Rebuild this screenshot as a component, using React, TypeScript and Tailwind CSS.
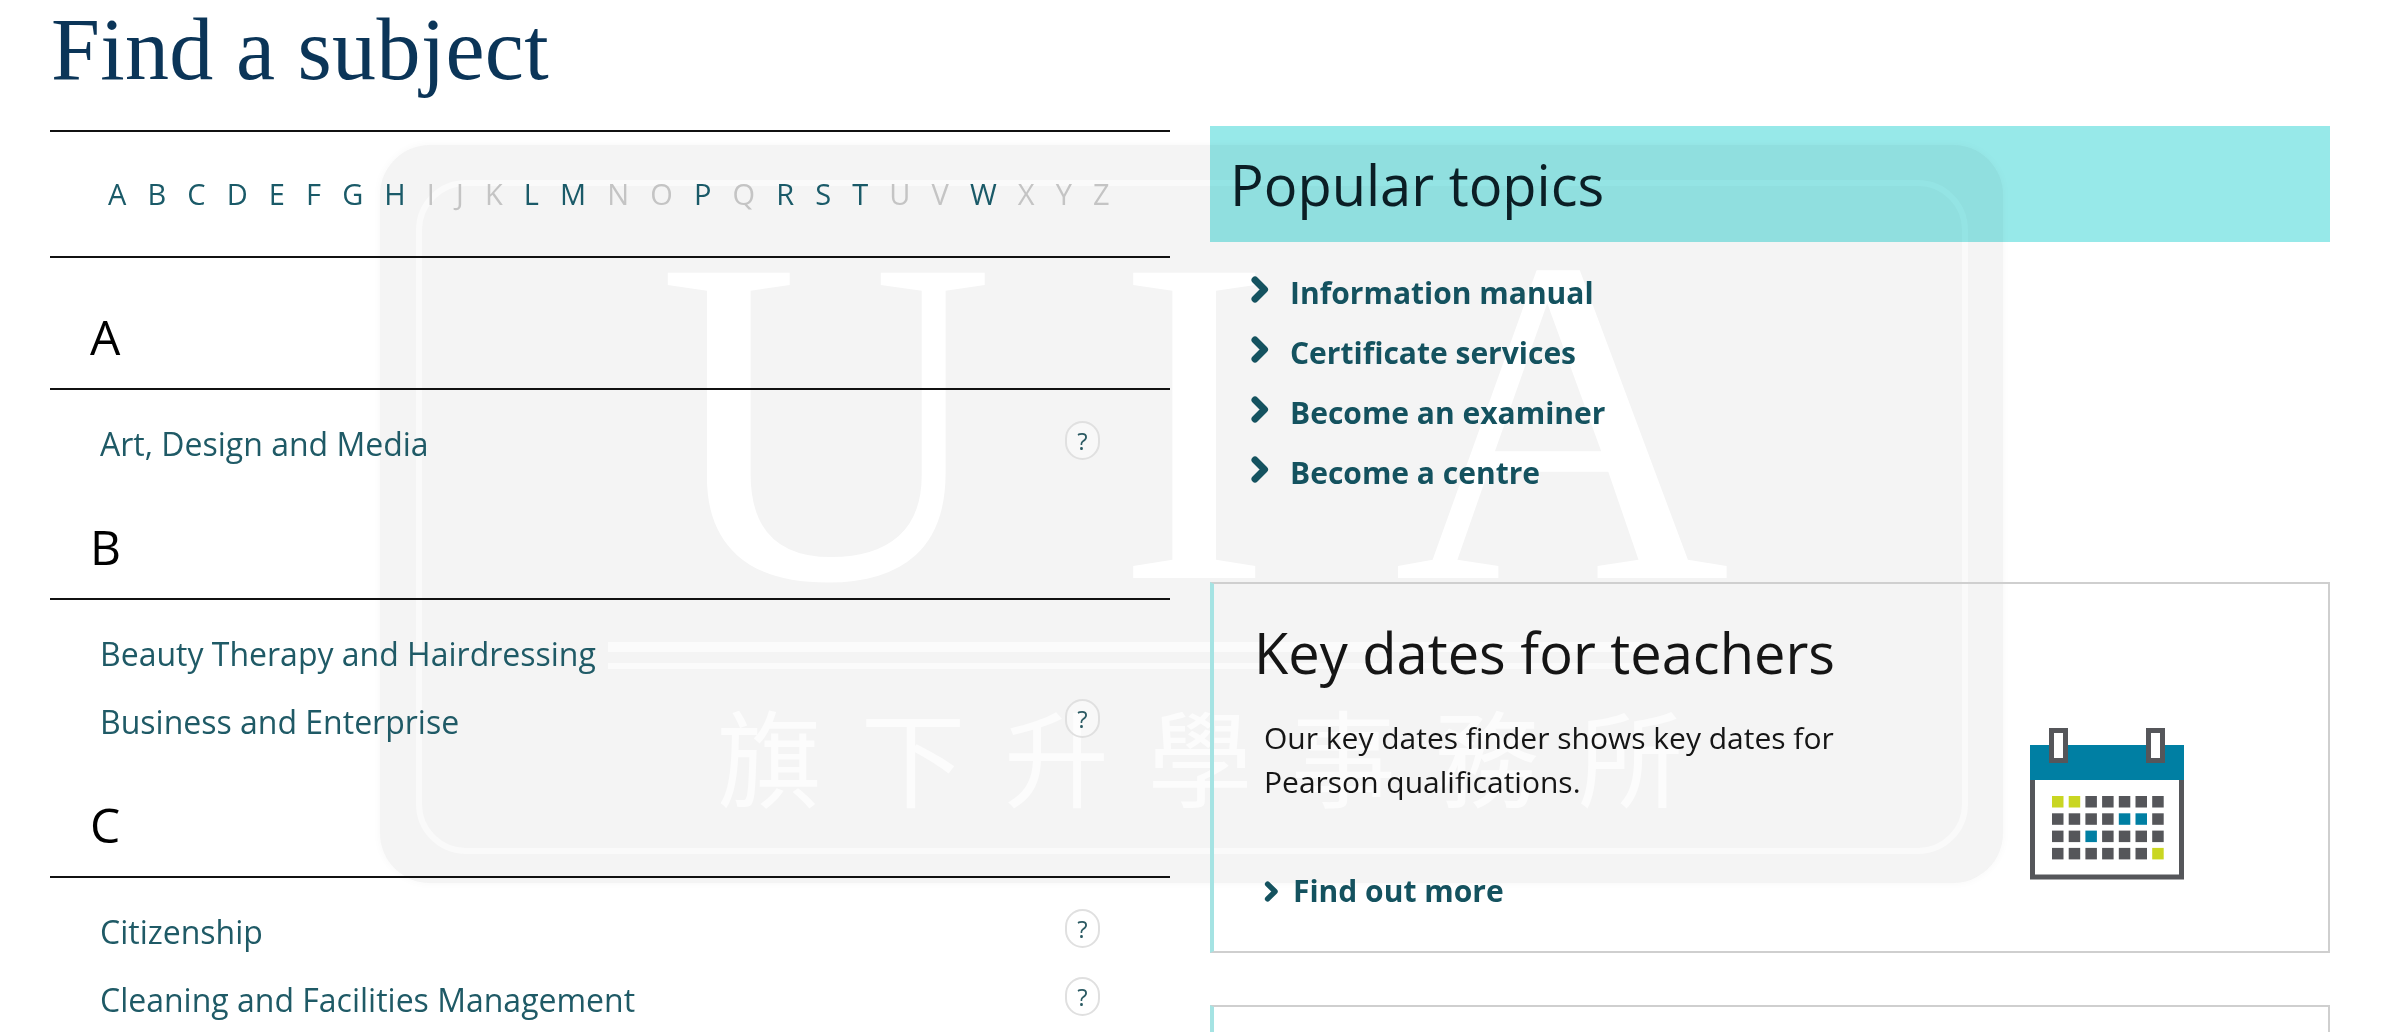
const letters = [
  ['A', true], ['B', true], ['C', true], ['D', true], ['E', true], ['F', true], ['G', true], ['H', true],
  ['I', false], ['J', false], ['K', false], ['L', true], ['M', true], ['N', false], ['O', false], ['P', true],
  ['Q', false], ['R', true], ['S', true], ['T', true], ['U', false], ['V', false], ['W', true], ['X', false],
  ['Y', false], ['Z', false],
] as const;

const groups = [
  {
    letter: 'A',
    listHeight: 'h-[78px]',
    items: [{ name: 'Art, Design and Media', help: true }],
  },
  {
    letter: 'B',
    listHeight: 'h-[146px]',
    items: [
      { name: 'Beauty Therapy and Hairdressing', help: false },
      { name: 'Business and Enterprise', help: true },
    ],
  },
  {
    letter: 'C',
    listHeight: '',
    items: [
      { name: 'Citizenship', help: true },
      { name: 'Cleaning and Facilities Management', help: true },
    ],
  },
];

const topics = ['Information manual', 'Certificate services', 'Become an examiner', 'Become a centre'];

const calendarRows = [
  ['#c9d622', '#c9d622', '#55565a', '#55565a', '#55565a', '#55565a', '#55565a'],
  ['#55565a', '#55565a', '#55565a', '#55565a', '#007fa3', '#007fa3', '#55565a'],
  ['#55565a', '#55565a', '#007fa3', '#55565a', '#55565a', '#55565a', '#55565a'],
  ['#55565a', '#55565a', '#55565a', '#55565a', '#55565a', '#55565a', '#c9d622'],
];

function Chevron({ className }: { className: string }) {
  return (
    <svg className={className} viewBox="0 0 18 27" fill="none" stroke="currentColor" strokeWidth={7} strokeLinecap="round" strokeLinejoin="round">
      <path d="M4 4L13.5 13.5L4 23" />
    </svg>
  );
}

function CalendarIcon() {
  return (
    <svg className="w-[154px] h-[152px] shrink-0" viewBox="0 0 154 152">
      <rect x="2.5" y="20" width="149" height="129" fill="#fff" stroke="#55565a" strokeWidth="5" />
      <rect x="0" y="17" width="154" height="35" fill="#007fa3" />
      <rect x="21.5" y="2.5" width="14" height="30" fill="#fff" stroke="#55565a" strokeWidth="5" />
      <rect x="118.5" y="2.5" width="14" height="30" fill="#fff" stroke="#55565a" strokeWidth="5" />
      {calendarRows.map((row, r) =>
        row.map((color, c) => (
          <rect key={`${r}-${c}`} x={22 + c * 16.7} y={68 + r * 17.3} width="11.5" height="11.5" fill={color} />
        )),
      )}
    </svg>
  );
}

function Watermark() {
  return (
    <div className="absolute left-[380px] top-[145px] -z-10 w-[1623px] h-[738px] rounded-[50px] bg-[#f4f4f4] shadow-[0_0_8px_#f7f7f7] overflow-hidden pointer-events-none select-none">
      <div className="absolute left-[36px] top-[35px] w-[1552px] h-[674px] rounded-[50px] border-[6px] border-[#fafafa]" />
      <div className="absolute left-[228px] top-[497px] w-[1032px] h-[10px] bg-[#fbfbfb]" />
      <div className="absolute left-[228px] top-[518px] w-[1032px] h-[6px] bg-[#fbfbfb]" />
      <div className="absolute left-[278px] top-[43px] w-[1072px] flex justify-between font-['Liberation_Serif',serif] text-[466px] leading-[466px] text-white">
        <span>U</span>
        <span>I</span>
        <span>A</span>
      </div>
      <div className="absolute left-[337px] top-[548px] w-[966px] flex justify-between font-['Noto_Sans_CJK_TC',sans-serif] text-[105px] leading-[120px] text-white/70">
        <span>旗</span>
        <span>下</span>
        <span>升</span>
        <span>學</span>
        <span>事</span>
        <span>務</span>
        <span>所</span>
      </div>
    </div>
  );
}

export default function App() {
  return (
    <div className="relative h-[1032px] overflow-hidden font-['Open_Sans',sans-serif]">
      <Watermark />
      <h1 className="pl-[51px] h-[110px] font-['Liberation_Serif',serif] text-[88px] leading-[100px] tracking-[0.3px] text-[#0b3558]">Find a subject</h1>
      <div className="flex pl-[50px] pr-[54px] gap-[40px]">
        <div className="w-[1120px] shrink-0 mt-[20px]">
          <div className="h-[128px] border-y-2 border-[#111] flex items-center pl-[58px] pr-[60px] justify-between text-[29px]">
            {letters.map(([l, on]) => (
              <span key={l} className={on ? 'text-[#1a5a68]' : 'text-[#c4c4c4]'}>{l}</span>
            ))}
          </div>
          {groups.map((g) => (
            <div key={g.letter}>
              <div className="h-[132px] pb-[21px] flex items-end pl-[40px] border-b-2 border-[#111] text-[48px] leading-[60px] text-black">{g.letter}</div>
              <ul className={`${g.listHeight} pt-[32px] pl-[50px] pr-[70px] flex flex-col gap-[24px]`}>
                {g.items.map((item) => (
                  <li key={item.name} className="flex items-center justify-between h-[44px] text-[32px] leading-[44px] text-[#1f5a66]">
                    <span>{item.name}</span>
                    {item.help && (
                      <span className="w-[35px] h-[39px] -mt-[7px] rounded-full border-2 border-[#e0e0e0] bg-white/40 flex items-center justify-center text-[24px] leading-none text-[#2b5a63]">?</span>
                    )}
                  </li>
                ))}
              </ul>
            </div>
          ))}
        </div>
        <div className="flex-1 min-w-0 pt-[16px]">
          <h2 className="h-[116px] pl-[20px] flex items-center bg-[#97e9e9] mix-blend-multiply text-[56px] text-[#0b1f26]">Popular topics</h2>
          <ul className="pt-[29px] pl-[40px] flex flex-col gap-[16px]">
            {topics.map((t) => (
              <li key={t} className="flex items-center gap-[20px] h-[44px] font-bold text-[30px] leading-[44px] text-[#14525f]">
                <Chevron className="w-[20px] h-[27px] -mt-[8px]" />
                <span>{t}</span>
              </li>
            ))}
          </ul>
          <div className="mt-[87px] h-[371px] border-2 border-l-[4px] border-[#cfcfcf] border-l-[#a5e3e3] flex justify-between pl-[40px] pr-[144px]">
            <div>
              <h3 className="pt-[30px] text-[56px] leading-[76px] text-[#151515]">Key dates for teachers</h3>
              <p className="mt-[26px] pl-[10px] text-[30px] leading-[44px] text-[#151515]">
                Our key dates finder shows key dates for
                <br />
                Pearson qualifications.
              </p>
              <a className="mt-[65px] pl-[10px] flex items-center gap-[14px] font-bold text-[30px] leading-[44px] text-[#14525f]">
                <Chevron className="w-[15px] h-[21px]" />
                Find out more
              </a>
            </div>
            <div className="pt-[144px]">
              <CalendarIcon />
            </div>
          </div>
          <div className="mt-[52px] h-[200px] border-2 border-l-[4px] border-[#cfcfcf] border-l-[#a5e3e3]" />
        </div>
      </div>
    </div>
  );
}
